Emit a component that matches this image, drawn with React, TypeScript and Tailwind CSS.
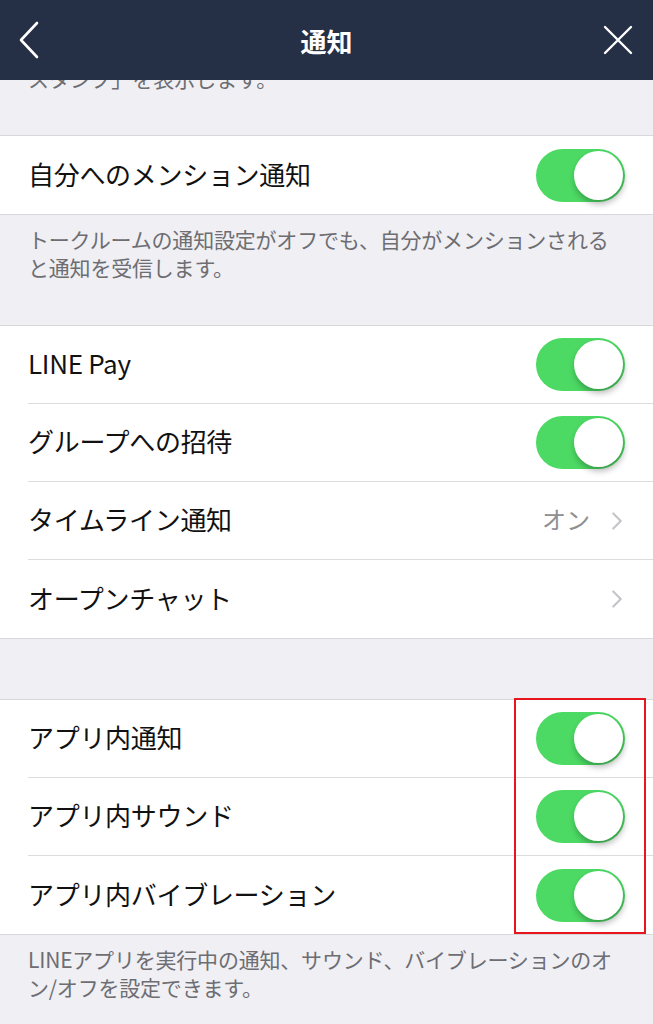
import { ChevronRight } from 'lucide-react';

const font = { fontFamily: '"Noto Sans CJK JP", "Noto Sans", sans-serif' };

function Toggle() {
    return (
        <div className="relative w-[89px] h-[53px] rounded-full bg-[#4cd964] shrink-0">
            <div className="absolute right-[2px] top-[2px] w-[49px] h-[49px] rounded-full bg-white shadow-[1px_4px_6px_rgba(0,0,0,0.28)]" />
        </div>
    );
}

function Row({ label, right, last }: { label: string; right: React.ReactNode; last?: boolean }) {
    return (
        <div className="pl-[28px]">
            <div className={`h-[78px] flex items-center justify-between pr-[28px] ${last ? '' : 'border-b border-[#dcdce0]'}`}>
                <span className="text-[26px] text-[#111] tracking-[-0.3px] pb-[4px]">{label}</span>
                {right}
            </div>
        </div>
    );
}

function Arrow({ value }: { value?: string }) {
    return (
        <div className="flex items-center gap-[12px] text-[#8e8e93]">
            {value && <span className="text-[24px] pb-[3px]">{value}</span>}
            <ChevronRight size={30} strokeWidth={1.7} className="text-[#c4c4c9] -mr-[7px]" />
        </div>
    );
}

export default function App() {
    return (
        <div className="w-[653px] h-[1024px] bg-[#efeff4] overflow-hidden" style={font}>
            <header className="h-[80px] bg-[#252f45] flex items-center justify-between px-[18px] relative z-10">
                <svg width="22" height="38" viewBox="0 0 22 38" fill="none">
                    <path d="M19 2L3 19L19 36" stroke="white" strokeWidth="2.6" strokeLinecap="round" strokeLinejoin="round" />
                </svg>
                <h1 className="absolute left-0 right-0 text-center text-[26px] font-bold text-white pointer-events-none">通知</h1>
                <svg width="30" height="30" viewBox="0 0 30 30" fill="none" className="mr-[2px]">
                    <path d="M2 2L28 28M28 2L2 28" stroke="white" strokeWidth="2.4" strokeLinecap="round" />
                </svg>
            </header>

            <div className="h-[55px] overflow-hidden">
                <p className="px-[28px] -mt-[16px] text-[21px] leading-[29px] text-[#6d6d72]">スタンプ」を表示します。</p>
            </div>

            <section className="bg-white border-y border-[#d8d8dc]">
                <Row label="自分へのメンション通知" right={<Toggle />} last />
            </section>

            <div className="h-[110px] px-[28px] pt-[10px] text-[21px] leading-[28px] text-[#6d6d72] tracking-[-0.2px]">
                トークルームの通知設定がオフでも、自分がメンションされると通知を受信します。
            </div>

            <section className="bg-white border-y border-[#d8d8dc]">
                <Row label="LINE Pay" right={<Toggle />} />
                <Row label="グループへの招待" right={<Toggle />} />
                <Row label="タイムライン通知" right={<Arrow value="オン" />} />
                <Row label="オープンチャット" right={<Arrow />} last />
            </section>

            <div className="h-[60px]" />

            <section className="relative bg-white border-y border-[#d8d8dc]">
                <Row label="アプリ内通知" right={<Toggle />} />
                <Row label="アプリ内サウンド" right={<Toggle />} />
                <Row label="アプリ内バイブレーション" right={<Toggle />} last />
                <div className="absolute -top-[2px] right-[7px] w-[132px] h-[236px] border-[2.5px] border-[#e8141e] pointer-events-none" />
            </section>

            <div className="px-[28px] pt-[10px] text-[21px] leading-[28px] text-[#6d6d72] tracking-[-0.2px]">
                LINEアプリを実行中の通知、サウンド、バイブレーションのオン/オフを設定できます。
            </div>
        </div>
    );
}
